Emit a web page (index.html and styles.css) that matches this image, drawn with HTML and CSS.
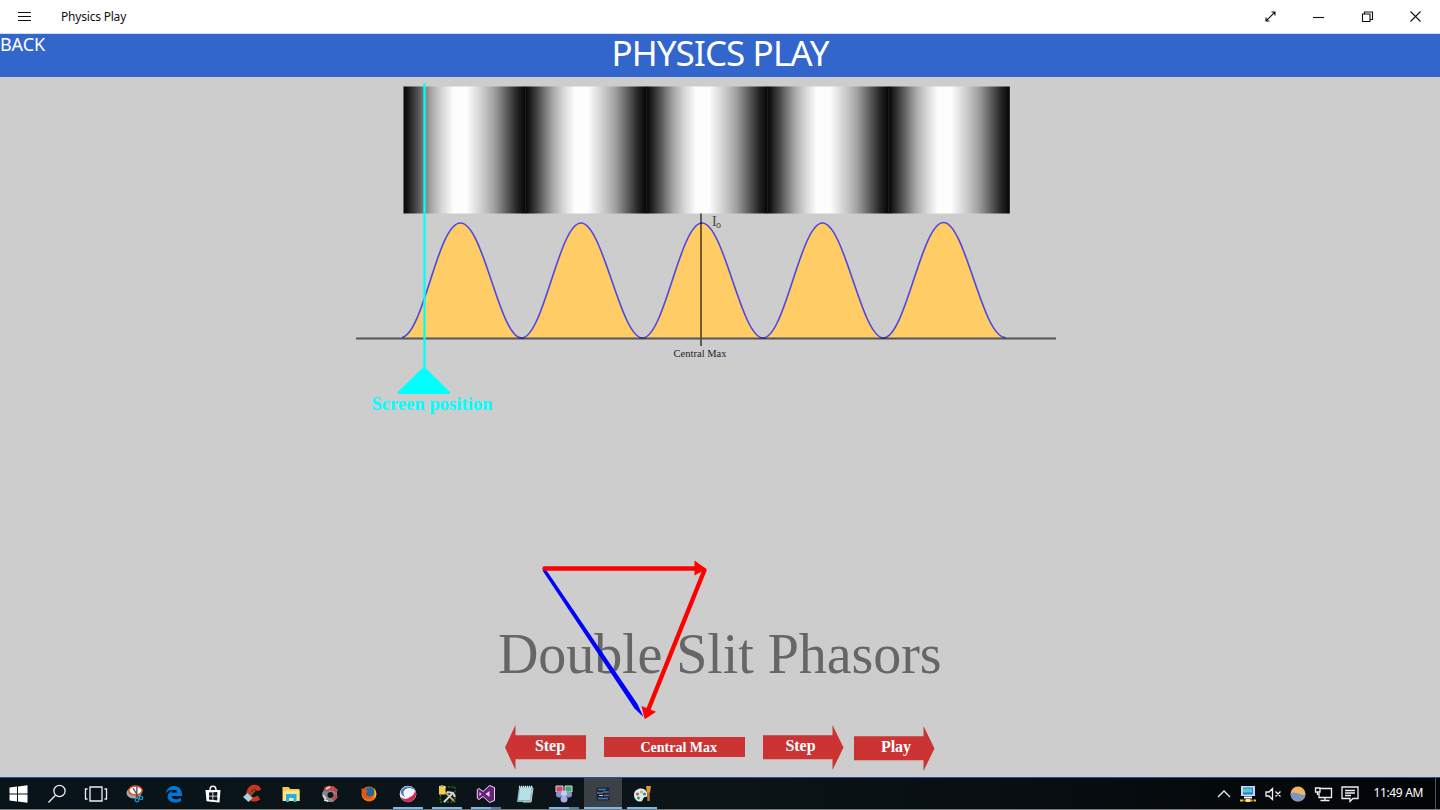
FILE: index.html
```
<!DOCTYPE html>
<html lang="en">
<head>
    <meta charset="UTF-8">
    <meta name="viewport" content="width=device-width, initial-scale=1.0">
    <title>Physics Play</title>
    <link rel="stylesheet" href="styles.css">
</head>
<body>
    <div class="titlebar">
        <svg class="menu-icon" width="14" height="12" viewBox="0 0 14 12"><path d="M0 1.500h13M0 5.500h13M0 9.500h13" /></svg>
        <span class="app-name">Physics Play</span>
        <div class="window-buttons">
            <svg width="13" height="13" viewBox="0 0 13 13"><path d="M2 11L11 2M7.500 2h3.500v3.500M2 7.500v3.500h3.500" /></svg>
            <svg width="13" height="13" viewBox="0 0 13 13"><path d="M1 7.500h11" /></svg>
            <svg width="13" height="13" viewBox="0 0 13 13"><path d="M1.500 4h7.500v7.500h-7.500zM3.500 4v-2h8v7.500h-2.500" /></svg>
            <svg width="13" height="13" viewBox="0 0 13 13"><path d="M1.500 1.500l10 10M11.500 1.500l-10 10" /></svg>
        </div>
    </div>

    <header>
        <a class="back">BACK</a>
        <h1>PHYSICS PLAY</h1>
    </header>

    <main>
        <svg class="stage" width="1440" height="648" viewBox="0 77 1440 648">
            <defs>
                <linearGradient id="fringe">
                    <stop offset="0" stop-color="#080808" />
                    <stop offset="0.025" stop-color="#101010" />
                    <stop offset="0.107" stop-color="#4a4a4a" />
                    <stop offset="0.17" stop-color="#7c7c7c" />
                    <stop offset="0.23" stop-color="#a8a8a8" />
                    <stop offset="0.32" stop-color="#d8d8d8" />
                    <stop offset="0.41" stop-color="#fdfdfd" />
                    <stop offset="0.52" stop-color="#fdfdfd" />
                    <stop offset="0.66" stop-color="#c6c6c6" />
                    <stop offset="0.74" stop-color="#a2a2a2" />
                    <stop offset="0.82" stop-color="#6e6e6e" />
                    <stop offset="0.93" stop-color="#252525" />
                    <stop offset="1" stop-color="#040404" />
                </linearGradient>
            </defs>

            <!-- fringes -->
            <g fill="url(#fringe)">
                <rect x="403.500" y="86.500" width="122" height="127" />
                <rect x="525" y="86.500" width="121.500" height="127" />
                <rect x="646" y="86.500" width="121.500" height="127" />
                <rect x="767" y="86.500" width="121.500" height="127" />
                <rect x="888" y="86.500" width="121.800" height="127" />
            </g>
            <path d="M525.500 87v126M646.500 87v126M767.500 87v126M888.500 87v126" stroke="#1c1c1c" />

            <!-- intensity -->
            <path d="M402 337.500C424 333 437.500 223 460.500 223S499.500 338 521.500 338S559 223 581 223S620.500 338 642.500 338S680 223 702 223S741 338 763 338S800.500 223 822.500 223S861.500 338 883.500 338S921.500 222.500 943.500 222.500S982 337.500 1005.500 337.500" fill="#fc6" stroke="#5347dc" stroke-width="1.600" />
            <path d="M356 338.500h700M701 213.500v132.500" stroke="#000" stroke-opacity="0.580" stroke-width="1.900" />
            <g class="serif" fill="#222">
                <text x="712" y="225.500" font-size="14" fill="#444">I</text>
                <text x="716" y="228" font-size="10" fill="#444">o</text>
                <text x="673.500" y="357" font-size="10.500" textLength="53">Central Max</text>
            </g>

            <!-- screen position -->
            <g fill="#0ff">
                <path d="M424.500 83v285" stroke="#0ff" stroke-width="2.300" />
                <path d="M424 366.500L450 392v2h-52.300v-2z" />
                <text class="serif" x="371.500" y="409.500" font-size="18.500" font-weight="bold" textLength="121">Screen position</text>
            </g>

            <!-- phasors -->
            <text class="serif" x="498" y="672.500" font-size="56" fill="#666" textLength="443.500">Double Slit Phasors</text>
            <path d="M542.500 570.500l3-1.500L637.500 704L643.500 717L634.500 708.500z" fill="#00f" />
            <path d="M544.500 568.500H697M704.500 570L648.500 709" stroke="#f00" stroke-width="4.400" stroke-linecap="round" />
            <path d="M694.500 560.500L706.300 569L694.500 575.500zM641.500 706L656 711.800L644.800 719.300z" fill="#f00" />
        </svg>

        <div class="controls">
            <button class="arrow left"><span>Step</span></button>
            <button class="center"><span>Central Max</span></button>
            <button class="arrow"><span>Step</span></button>
            <button class="arrow play"><span>Play</span></button>
        </div>
    </main>

    <footer class="taskbar">
        <div class="apps">
            <div class="app"><svg viewBox="0 0 24 24"><path d="M3.500 5.500l7.500-1v7h-7.500zM12 4.400l9.500-1.200v8.300h-9.500zM3.500 12.500h7.500v7l-7.500-1zM12 12.500h9.500v8.300l-9.500-1.200z" fill="#fff" /></svg></div>
            <div class="app"><svg viewBox="0 0 24 24"><path d="M10.200 13.500L3.500 20.500" class="line" /><circle cx="14.500" cy="9" r="5.600" class="line" /></svg></div>
            <div class="app"><svg viewBox="0 0 24 24"><path d="M6 5h12v14H6zM3.500 7H1.500v10h2M20.500 7h2v10h-2" class="line" /></svg></div>
            <div class="app"><svg viewBox="0 0 24 24">
                <ellipse cx="11" cy="11" rx="7.500" ry="5.500" fill="#a4a8ac" /><ellipse cx="12.500" cy="8.500" rx="6.700" ry="4.500" fill="#fff" stroke="#d84b23" stroke-width="1.500" />
                <path d="M10 6l6 10M14 4.500l-.5 12" stroke="#555" stroke-width="1.400" /><circle cx="14" cy="18" r="1.800" fill="none" stroke="#1b91c8" stroke-width="1.300" /><circle cx="18" cy="16" r="1.600" fill="none" stroke="#1b91c8" stroke-width="1.300" />
            </svg></div>
            <div class="app"><svg viewBox="0 0 24 24"><path d="M3.800 11.500C5 1.500 19.800 1 20 12.500V14H9.500c.5 4 6 4 9.500 1.800v3.400C9 23 3 17 6.800 11.500C8 9.500 10 8.500 12 8.300C7.500 7.500 5 9.500 3.800 11.500zM9.600 10.800h5.700c-.2-4-5.200-4-5.700 0z" fill="#0078d7" fill-rule="evenodd" /></svg></div>
            <div class="app"><svg viewBox="0 0 24 24"><path d="M4.500 8h15l-1 12.500l-13-1.200z" fill="#fff" /><path d="M9 8c0-5 6-5 6 0" stroke="#fff" stroke-width="1.400" fill="none" /><path d="M8 10.500l3.500-.3v3.500H8zM12.300 10.200l4-.3v3.800h-4zM8 14.500h3.500V18L8 17.600zM12.300 14.500h4v3.900l-4-.4z" fill="#101820" /></svg></div>
            <div class="app"><svg viewBox="0 0 24 24"><path d="M19 8.500C17.500 3.500 11 4 9 9.500S12 20 19 15.500" fill="none" stroke="#c9351f" stroke-width="4.500" /><path d="M15 8L10 13.500" stroke="#925326" stroke-width="2.200" /><path d="M7.500 11l5 5L8.500 20L3 15z" fill="#a9d2e4" /></svg></div>
            <div class="app"><svg viewBox="0 0 24 24"><path d="M3.500 5h6l2 2h9v12h-17z" fill="#f3c84f" /><path d="M4 8.500h16.500v10.500H4z" fill="#fde58a" /><path d="M7 12h10.500v8h-3v-4h-4.500v4H7z" fill="#1fb1ec" /></svg></div>
            <div class="app"><svg viewBox="0 0 24 24"><path d="M8 5l7-1 4 4 0 8-4 4-6 0-4-4-1-5z" fill="#85898c" /><path d="M6 5.500c5-3 10-2 14 2.500l-2 3.500c-2-4-7-4-10-1zM17 12l3 3-4 4-2-2z" fill="#c04848" /><path d="M5 13l3 4M8 7l4-2M6 18l4 1" stroke="#e4e4e4" stroke-width="1.500" /><circle cx="12.500" cy="13" r="3" fill="#101417" /></svg></div>
            <div class="app"><svg viewBox="0 0 24 24"><circle cx="12" cy="12" r="7.500" fill="#e8731a" /><circle cx="12.500" cy="10" r="4.800" fill="#24659c" /><path d="M4.800 6c2 2 4 1 6 3l-2 3c1 3 5 3 7 1c0 4-5 5-8 3c-2-2-4-6-3-10z" fill="#e5531a" /><path d="M17 6c3 4 3 8 0 11c1-4 1-7 0-11z" fill="#ffc23b" /></svg></div>
            <div class="app open"><svg viewBox="0 0 24 24"><circle cx="12" cy="12" r="8.300" fill="#eef3fa" /><path d="M5 9c3-6 11-6 14-1c-5-3-8-2-9 1s4 4 4 6c-5 1-10-2-9-6z" fill="#477dc1" /><path d="M14 15c3-1 5-4 5-7c3 6-1 12-7 12c-4 0-6-2-7-5c3 3 7 2 9 0z" fill="#c92c58" /><path d="M7.500 11c0-3 4-6 8-4c-3 0-5 2-3.500 4s3 3 1 4.500c-3 1-5.500-2-5.500-4.500z" fill="#fff" /></svg></div>
            <div class="app open"><svg viewBox="0 0 24 24"><path d="M6 5h14v15H5z" fill="none" stroke="#3e8e28" stroke-dasharray="2 1.500" /><path d="M4 4.500h6.500v8H4z" fill="#f3cf4c" /><path d="M4 5c2-1.500 4-1.500 6.500 0" stroke="#fff3b0" fill="none" /><path d="M10 10l9 9" stroke="#c9a452" stroke-width="2" /><path d="M17 12l-8 8M12 10l6 1 2 4" stroke="#cfd9e5" stroke-width="2" fill="none" /></svg></div>
            <div class="app open stack"><svg viewBox="0 0 24 24"><path d="M15.500 3.500l5 2v13l-5 2L9 14.500L5 17.500l-1.700-1V7.500L5 6.500l4 3z" fill="#68217a" stroke="#e9d9ee" /><path d="M15.500 9v6l-4-3zM5.500 10v4l2-2z" fill="#e9d9ee" /></svg></div>
            <div class="app"><svg viewBox="0 0 24 24"><path d="M6 4.500h14L18 20H4z" fill="#76b5c4" /><path d="M7 6h11.500l-1.500 12H5.500z" fill="#b7e0e6" /><path d="M6 4.800h14" stroke="#eee" stroke-width="2" stroke-dasharray="1 1" /><path d="M20 6l-2 14h-8" fill="none" stroke="#ddd7b4" /></svg></div>
            <div class="app open stack"><svg viewBox="0 0 24 24"><path d="M4 4h7v6H4z" fill="#d84760" stroke="#d5d8ee" /><path d="M13 4h7v6h-7z" fill="#42a968" stroke="#d5d8ee" /><circle cx="7" cy="12.500" r="3" fill="#8795cf" /><circle cx="17" cy="12.500" r="3" fill="#8795cf" /><circle cx="12" cy="11.500" r="3" fill="#c7cbed" /><circle cx="12" cy="17" r="3.500" fill="#a7afe0" /></svg></div>
            <div class="app active"><svg viewBox="0 0 24 24"><path d="M5.500 5.500h13v13h-13z" fill="#17253b" /><path d="M7 7.500h8M12 10h6M7 16.500h10" stroke="#3e78b5" stroke-width="1.600" /><path d="M6 11h6M13 13.500h5" stroke="#8b614b" stroke-width="1.400" /><path d="M8 13.500h4" stroke="#a4c8e4" /></svg></div>
            <div class="app open"><svg viewBox="0 0 24 24"><path d="M4 13c0-8 13-9 13.500 0c0 3-3 1-4 3s-1 4-4 3.500c-3 0-5.500-3-5.500-6.500z" fill="#d6edf6" /><circle cx="7.500" cy="12" r="1.500" fill="#d34a36" /><circle cx="11.500" cy="10" r="1.500" fill="#e2ac27" /><circle cx="8.500" cy="16" r="1.500" fill="#3f9e47" /><circle cx="14.500" cy="12" r="1.500" fill="#3184c5" /><path d="M16 4h5l-1 7h-3z" fill="#e49535" /><path d="M18.500 10v9" stroke="#c4762a" stroke-width="2.400" /></svg></div>
        </div>
        <div class="tray">
            <svg width="14" height="20" viewBox="0 0 14 20"><path d="M1 13l6-6 6 6" class="line" /></svg>
            <svg width="18" height="20" viewBox="0 0 18 20"><path d="M2 2h14v10H2z" fill="#cbd6ff" /><path d="M4 3.500h10v7H4z" fill="#2c75dc" /><path d="M4 4.500h9v4H4z" fill="#4fd0b8" /><path d="M5 13.500h8" stroke="#fff" stroke-width="2" /><path d="M1 16.500h16" stroke="#f2c21f" stroke-width="2" stroke-dasharray="3.500 1" /><path d="M7 15h4v3H7z" fill="#ffe56a" /></svg>
            <svg width="17" height="20" viewBox="0 0 17 20"><path d="M1 8h3l3.500-3.500v11l-3.500-3.500H1zM10.500 7.500l5 5M15.500 7.500l-5 5" class="line" /></svg>
            <svg width="16" height="20" viewBox="0 0 16 20"><circle cx="8" cy="10" r="7.500" fill="#f3b563" /><path d="M.6 10.500C4 5.500 8 11 15.400 11C13 19 2 20 .6 10.500z" fill="#7c94c6" /></svg>
            <svg width="19" height="20" viewBox="0 0 19 20"><path d="M6 4.500h11.500v9H5V9M11 13.500v3M6.500 16.500h9M1.500 4h4.500v4h-4.500zM3.500 8v3" class="line" /></svg>
            <svg width="18" height="20" viewBox="0 0 18 20"><path d="M1 3h16v11.500h-5l-3 3v-3H1zM4 6.500h10M4 9h10M4 11.500h6" class="line" /></svg>
            <span class="clock">11:49 AM</span>
        </div>
    </footer>
</body>
</html>
```

FILE: styles.css
```
body {
    margin: 0;
    height: 810px;
    display: flex;
    flex-direction: column;
    overflow: hidden;
    background-color: #cdcdcd;
    font-family: 'Noto Sans', 'Open Sans', sans-serif;
}

svg {
    display: block;
}

.titlebar {
    height: 33px;
    display: flex;
    align-items: center;
    background-color: white;
    border-bottom: 1px solid #d5dff2;
    padding: 0 18px;
    font-size: 12px;
    color: #111;
}

.titlebar svg {
    fill: none;
    stroke: #111;
    stroke-width: 1.1;
}

.app-name {
    margin-left: 29px;
    letter-spacing: -0.2px;
}

.window-buttons {
    margin-left: auto;
    display: flex;
    gap: 35.5px;
}

header {
    height: 43px;
    display: grid;
    grid-template-columns: 1fr auto 1fr;
    background-color: #3366cc;
    color: white;
}

.back {
    font-size: 18px;
    line-height: 20px;
    letter-spacing: -0.1px;
}

h1 {
    margin: 0;
    font-size: 35px;
    font-weight: normal;
    line-height: 37px;
    letter-spacing: -0.9px;
}

.serif {
    font-family: 'Liberation Serif', serif;
}

.controls {
    height: 52px;
    display: flex;
    padding-left: 505px;
}

button {
    border: none;
    padding: 0;
    background-color: #cc3333;
    color: white;
    font-family: 'Liberation Serif', serif;
    font-weight: bold;
    font-size: 16px;
}

.arrow {
    width: 81px;
    height: 45px;
    margin-right: 10px;
    padding-right: 5px;
    padding-bottom: 3px;
    clip-path: polygon(0 23%, 70px 23%, 70px 0, 100% 50%, 70px 100%, 70px 76%, 0 76%);
}

.arrow.left {
    margin-right: 18px;
    padding-left: 9px;
    padding-right: 0;
    clip-path: polygon(100% 23%, 10.500px 23%, 10.500px 0, 0 50%, 10.500px 100%, 10.500px 76%, 100% 76%);
}

.arrow.play {
    margin: 1px 0 0;
    padding-right: 0;
    padding-left: 4px;
}

.center {
    width: 140.500px;
    height: 20px;
    margin: 12px 18px 0 0;
    padding-left: 9px;
    padding-top: 1px;
    font-size: 14px;
    line-height: 20px;
}

.taskbar {
    height: 31px;
    display: flex;
    justify-content: space-between;
    border-top: 1px solid #2a51a0;
    border-bottom: 1px solid #777;
    background: linear-gradient(90deg, #08141a, #0c1418 50%, #020508);
}

.apps {
    display: flex;
    gap: 1px;
    margin-left: -1px;
}

.app {
    width: 38px;
    height: 31px;
    box-sizing: border-box;
    padding: 4px 7px 0 6.5px;
    border-bottom: 2px solid transparent;
}

.app svg {
    width: 24px;
    height: 24px;
}

.open {
    background: linear-gradient(#76b9ed, #76b9ed) 4px 29px / 30px 2px no-repeat border-box;
}

.open.stack {
    background-image: linear-gradient(90deg, #76b9ed 20px, #527ea5 20px);
}

.active {
    background-color: #3c4145;
    border-bottom-color: #76b9ed;
}

.line {
    fill: none;
    stroke: #f0f0f0;
    stroke-width: 1.3;
}

.tray {
    display: flex;
    align-items: center;
    gap: 8px;
    padding-right: 12px;
    margin-right: 4px;
    border-right: 1px solid #555;
    color: white;
    font-size: 12px;
}

.clock {
    margin-left: 6px;
    margin-top: -2px;
    letter-spacing: -0.35px;
}
```
